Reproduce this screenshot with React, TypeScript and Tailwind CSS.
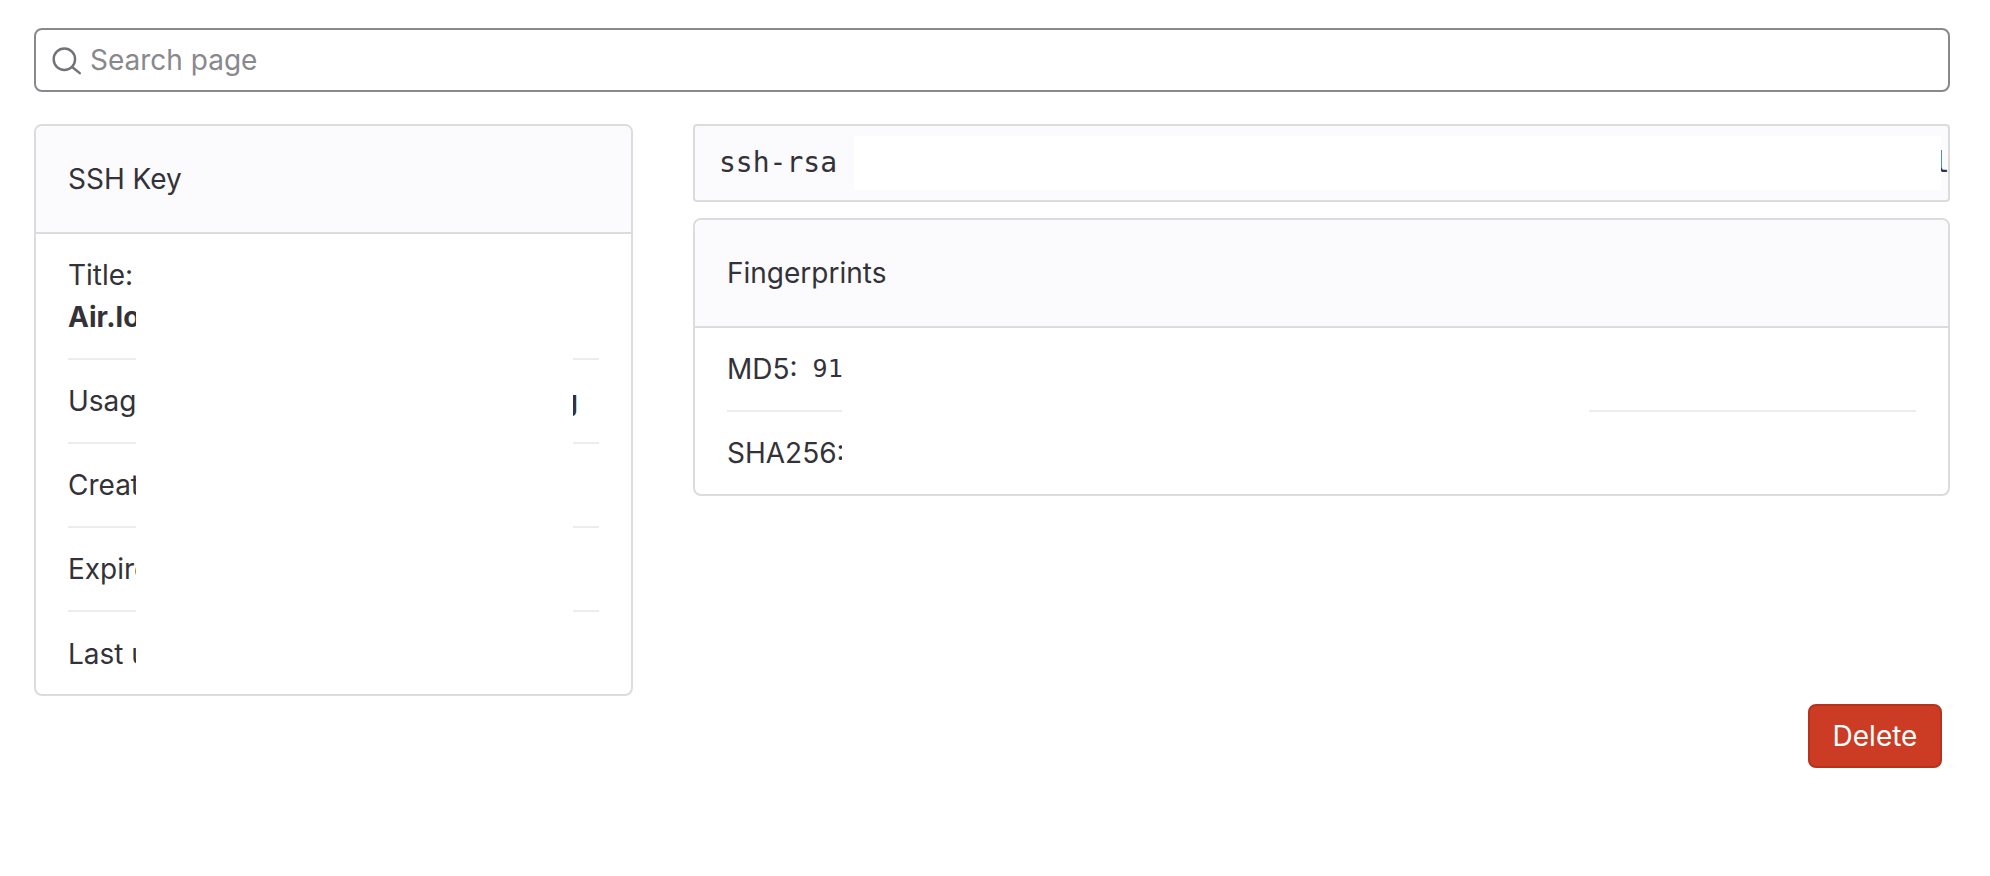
import React from 'react';

const rows = [
  { label: 'Usage type:', value: 'Authentication & Signing', tail: 'ml-auto mr-[21px]' },
  { label: 'Created:', value: 'May 17, 2024', tail: 'ml-[8px]' },
  { label: 'Expires:', value: 'Never', tail: 'ml-[8px]' },
  { label: 'Last used:', value: 'Never', tail: 'ml-[8px]' },
];

const sans = 'font-["Inter","Noto_Sans",sans-serif]';
const mono = 'font-["DejaVu_Sans_Mono","Liberation_Mono",monospace]';

export default function App() {
  return (
    <div className={`min-h-[876px] bg-white px-[34px] pt-[28px] text-[28px] leading-[40px] text-[#333238] ${sans}`}>
      <div className="w-[1916px]">
        {/* Search */}
        <div className="flex h-[64px] items-center rounded-[8px] border-2 border-[#89888d] pl-[16px]">
          <svg width="30" height="30" viewBox="0 0 16 16" fill="none" stroke="#737278" strokeWidth="1.3">
            <circle cx="6.6" cy="7.6" r="5.7" />
            <path d="M10.9 11.9l3.9 3.1" strokeLinecap="round" />
          </svg>
          <span className="ml-[8px] text-[#89888d]">Search page</span>
        </div>

        <div className="mt-[32px] flex gap-[60px]">
          {/* SSH key card */}
          <div className="relative h-[572px] w-[599px] shrink-0 rounded-[8px] border-2 border-[#dcdcde]">
            <div className="flex h-[108px] items-center rounded-t-[6px] border-b-2 border-[#dcdcde] bg-[#fbfafd] px-[32px]">SSH Key</div>
            <div className="px-[32px]">
              <div className="h-[126px] border-b-2 border-[#ececef] pt-[20px] leading-[42px]">
                <div>Title:</div>
                <div className="font-bold">Air.local key</div>
              </div>
              {rows.map((r, i) => (
                <div key={r.label} className={`flex h-[84px] items-center whitespace-nowrap ${i < rows.length - 1 ? 'border-b-2 border-[#ececef]' : ''}`}>
                  {r.label}
                  <span className={`font-semibold ${r.tail}`}>{r.value}</span>
                </div>
              ))}
            </div>
            <div className="absolute left-[100px] top-[108px] bottom-0 w-[437px] bg-white" />
          </div>

          <div className="min-w-0 flex-1">
            {/* Public key */}
            <div className="relative flex h-[78px] items-center overflow-hidden rounded-[4px] border-2 border-[#dcdcde] bg-[#fbfafd]">
              <div className={`whitespace-nowrap pl-[24px] ${mono}`}>ssh-rsa AAAAB3NzaC1yc2EAAAADAQABAAABgQC7vbqajDhA1x9mZ0pLqk4TnY2sR8uWfEoGld3HtJb</div>
              <div className="absolute left-[159px] top-[10px] h-[54px] w-[1087px] bg-white" />
            </div>

            {/* Fingerprints */}
            <div className="relative mt-[16px] h-[278px] rounded-[8px] border-2 border-[#dcdcde]">
              <div className="flex h-[108px] items-center rounded-t-[6px] border-b-2 border-[#dcdcde] bg-[#fbfafd] px-[32px]">Fingerprints</div>
              <div className="px-[32px]">
                <div className="flex h-[84px] items-center whitespace-nowrap border-b-2 border-[#ececef]">
                  MD5:
                  <span className={`ml-[15px] text-[25px] ${mono}`}>91:4c:7e:a2:08:de:33:5f:b1:62:0a:9d:e7:14:c8:26</span>
                </div>
                <div className="flex h-[82px] items-center">SHA256:</div>
              </div>
              <div className="absolute left-[147px] top-[108px] bottom-0 w-[747px] bg-white" />
            </div>
          </div>
        </div>

        {/* Actions */}
        <div className="mt-[8px] flex justify-end pr-[8px]">
          <button className="h-[64px] w-[134px] rounded-[8px] border-2 border-[#b8331c] bg-[#cc3c24] text-white">Delete</button>
        </div>
      </div>
    </div>
  );
}
